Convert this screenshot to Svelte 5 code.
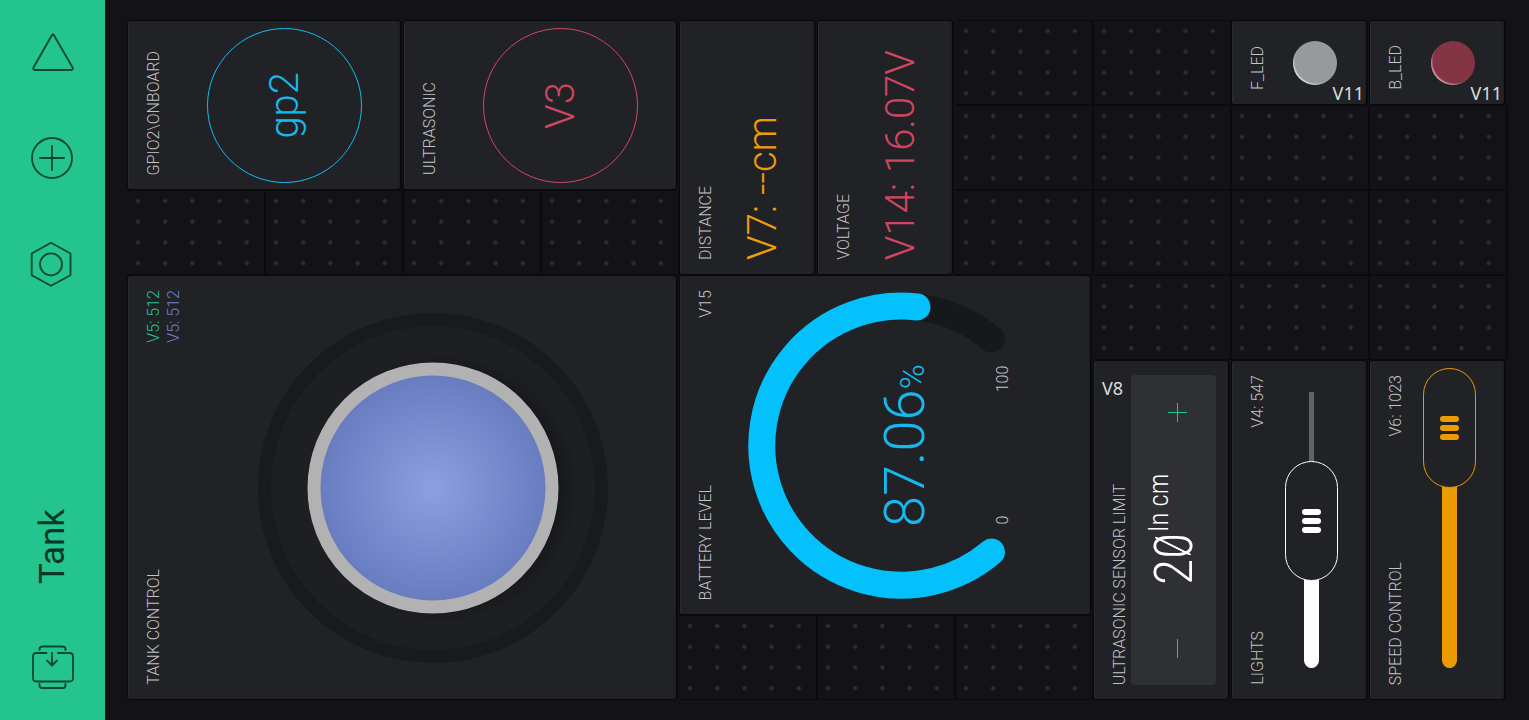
<script>
  const COLS = 10;
  const ROWS = 8;

  // Areas taken by widgets, as [column, row, columns, rows]
  const areas = {
    gpio: [1, 1, 2, 2],
    ultrasonic: [3, 1, 2, 2],
    distance: [5, 1, 1, 3],
    voltage: [6, 1, 1, 3],
    frontLed: [9, 1, 1, 1],
    backLed: [10, 1, 1, 1],
    tank: [1, 4, 4, 5],
    battery: [5, 4, 3, 4],
    limit: [8, 5, 1, 4],
    lights: [9, 5, 1, 4],
    speed: [10, 5, 1, 4],
  };

  const place = ([c, r, w, h]) => `grid-area: ${r} / ${c} / span ${h} / span ${w}`;

  const taken = (c, r) =>
    Object.values(areas).some(([x, y, w, h]) => c >= x && c < x + w && r >= y && r < y + h);

  const emptyCells = [];
  for (let r = 1; r <= ROWS; r++) {
    for (let c = 1; c <= COLS; c++) {
      if (!taken(c, r)) emptyCells.push([c, r, 1, 1]);
    }
  }

  let limit = $state(20);
  let lights = $state(547);
  let speed = $state(1023);
</script>

<div class="app">
  <nav class="bar">
    <button class="icon" aria-label="Run">
      <svg viewBox="0 0 46 46"><path d="M24.100 5.500 42.600 37.500Q43.500 40 41.200 40H5Q2.500 40 3.500 37.500L21.700 5.500Q22.900 3.500 24.100 5.500Z" /></svg>
    </button>
    <button class="icon" aria-label="Add widget">
      <svg viewBox="0 0 46 46"><circle cx="22" cy="22" r="20" /><path d="M22 10v24M10 22h24" /></svg>
    </button>
    <button class="icon" aria-label="Settings">
      <svg viewBox="0 0 46 46"><path d="M21 .8 40.500 11.500v21.800L21 43.800 1.700 33.300V11.500Z" /><circle cx="21" cy="22.300" r="11" /></svg>
    </button>
    <h1 class="up">Tank</h1>
    <button class="icon" aria-label="Projects">
      <svg viewBox="0 0 46 46">
        <path d="M16.500 9H6.500Q3 9 3 12.500V34Q3 37.500 6.500 37.500H39.500Q43 37.500 43 34V12.500Q43 9 39.500 9H28" />
        <path d="M9.500 6V5Q9.500 2.500 12.500 2.500H32.500Q35.500 2.500 35.500 5V6M9.500 40V41Q9.500 44 12 44H33Q35.500 44 35.500 41V40" />
        <path d="M22 9V21M17 16.500 22 21.500 27 16.500" />
      </svg>
    </button>
  </nav>

  <main class="board">
    {#each emptyCells as cell}
      <div class="cell" style={place(cell)}></div>
    {/each}

    <section class="card" style={place(areas.gpio)}>
      <header class="head"><h2 class="up">GPIO2\ONBOARD</h2></header>
      <div class="body"><button class="round blue"><span class="up">gp2</span></button></div>
    </section>

    <section class="card" style={place(areas.ultrasonic)}>
      <header class="head"><h2 class="up">ULTRASONIC</h2></header>
      <div class="body"><button class="round red"><span class="up">V3</span></button></div>
    </section>

    <section class="card" style={place(areas.distance)}>
      <header class="head"><h2 class="up">DISTANCE</h2></header>
      <div class="body reading"><p class="up amber">V7: --cm</p></div>
    </section>

    <section class="card" style={place(areas.voltage)}>
      <header class="head"><h2 class="up">VOLTAGE</h2></header>
      <div class="body reading"><p class="up red">V14: 16.07V</p></div>
    </section>

    <section class="card led" style={place(areas.frontLed)}>
      <header class="head"><h2 class="up">F_LED</h2></header>
      <div class="body"><i class="lamp"></i></div>
      <span class="pin corner">V11</span>
    </section>

    <section class="card led" style={place(areas.backLed)}>
      <header class="head"><h2 class="up">B_LED</h2></header>
      <div class="body"><i class="lamp lit"></i></div>
      <span class="pin corner">V11</span>
    </section>

    <section class="card" style={place(areas.tank)}>
      <header class="head">
        <span class="up label green">V5: 512</span>
        <h2 class="up">TANK CONTROL</h2>
      </header>
      <div class="head second"><span class="up label indigo">V5: 512</span></div>
      <div class="body">
        <svg class="stick" viewBox="0 0 350 350" role="img" aria-label="Joystick">
          <defs>
            <radialGradient id="ball">
              <stop offset="0" stop-color="#8b9fe1" />
              <stop offset="1" stop-color="#667bbd" />
            </radialGradient>
            <radialGradient id="shade">
              <stop offset=".85" stop-color="#121316" stop-opacity=".6" />
              <stop offset="1" stop-color="#121316" stop-opacity="0" />
            </radialGradient>
          </defs>
          <circle cx="175" cy="175" r="168.500" fill="#1e1f23" stroke="#191a1e" stroke-width="13" />
          <circle cx="186" cy="175" r="135" fill="url(#shade)" />
          <circle cx="175" cy="175" r="119" fill="url(#ball)" />
          <circle cx="175" cy="175" r="119" fill="none" stroke="#b2b2b2" stroke-width="13" />
        </svg>
      </div>
    </section>

    <section class="card" style={place(areas.battery)}>
      <header class="head">
        <span class="up label">V15</span>
        <h2 class="up">BATTERY LEVEL</h2>
      </header>
      <div class="body">
        <svg class="gauge" viewBox="0 0 370 338" role="img" aria-label="Battery level">
          <path d="M271.500 276A139.500 139.500 0 1 1 271.500 63" stroke="#17181c" />
          <path d="M271.500 276A139.500 139.500 0 1 1 197 31" stroke="#04c0fb" />
          <g transform="rotate(-90)">
            <text class="value" x="-251" y="204">87.06<tspan class="unit">%</tspan></text>
            <text class="scale" x="-244" y="288">0</text>
            <text class="scale" x="-103" y="288">100</text>
          </g>
        </svg>
      </div>
    </section>

    <section class="card" style={place(areas.limit)}>
      <header class="head"><h2 class="up">ULTRASONIC SENSOR LIMIT</h2></header>
      <div class="stepper">
        <button aria-label="Increase" onclick={() => limit++}>
          <svg viewBox="0 0 20 20"><path d="M10.500 1v19M1 10.500h19" /></svg>
        </button>
        <output class="up"><span class="num">{#each String(limit) as digit}<span class:zero={digit === "0"}>{digit}</span>{/each}</span><span class="in">In cm</span></output>
        <button aria-label="Decrease" onclick={() => limit--}>
          <svg viewBox="0 0 20 20"><path d="M10.500 1v19" /></svg>
        </button>
      </div>
      <span class="pin top">V8</span>
    </section>

    <section class="card" style={place(areas.lights)}>
      <header class="head">
        <span class="up label">V4: {lights}</span>
        <h2 class="up"><label for="lights">LIGHTS</label></h2>
      </header>
      <div class="slider white" style="--v: {lights / 1023}">
        <i class="rail"></i>
        <i class="fill"></i>
        <input id="lights" type="range" min="0" max="1023" bind:value={lights} />
      </div>
    </section>

    <section class="card" style={place(areas.speed)}>
      <header class="head">
        <span class="up label">V6: {speed}</span>
        <h2 class="up"><label for="speed">SPEED CONTROL</label></h2>
      </header>
      <div class="slider orange" style="--v: {speed / 1023}">
        <i class="rail"></i>
        <i class="fill"></i>
        <input id="speed" type="range" min="0" max="1023" bind:value={speed} />
      </div>
    </section>
  </main>
</div>

<style>
  :global(body) {
    margin: 0;
    background: #121217;
  }

  .app {
    display: flex;
    min-height: 100vh;
    color: #c4c4c6;
    font-family: Roboto, "Open Sans", sans-serif;
    font-weight: 300;
  }

  button {
    padding: 0;
    border: 0;
    background: none;
    color: inherit;
    font: inherit;
    cursor: pointer;
  }

  h1,
  h2,
  p {
    margin: 0;
    font-weight: 300;
  }

  /* Text that reads from bottom to top */
  .up {
    writing-mode: vertical-rl;
    transform: rotate(180deg);
    white-space: nowrap;
  }

  .bar {
    display: flex;
    flex-direction: column;
    align-items: center;
    gap: 60px;
    flex: 0 0 105px;
    box-sizing: border-box;
    padding: 30px 0;
    background: #24c48e;
  }

  .bar h1 {
    margin-top: auto;
    color: #08372a;
    font-size: 35px;
    font-weight: 400;
    line-height: 44px;
  }

  .icon,
  .icon svg {
    display: block;
    width: 46px;
    height: 46px;
  }

  .icon svg {
    overflow: visible;
    fill: none;
    stroke: #0b4636;
    stroke-width: 1.8;
    stroke-linecap: round;
    stroke-linejoin: round;
  }

  .board {
    display: grid;
    flex: 1;
    grid-template-columns: repeat(10, minmax(0, 1fr));
    grid-template-rows: repeat(8, minmax(0, 1fr));
    padding: 20px 22px;
  }

  .cell {
    margin: 0 -1px 0 1px;
    border: solid #0b0b0f;
    border-width: 1px 2px 1px 0;
    background: radial-gradient(circle at 10px 10px, #303135 1px, transparent 3px) 0 0 / 20% 25% #121217;
  }

  .card {
    position: relative;
    display: flex;
    min-width: 0;
    margin: 1px 3px 1px 1px;
    box-sizing: border-box;
    border-radius: 3px;
    background: #212226;
    box-shadow: inset 1px 0 #2b2c30, inset -1px 0 #1d1e22, 0 0 0 1px #09090d, 2px 0 0 #0c0c10;
  }

  .head {
    display: flex;
    flex: 0 0 20px;
    flex-direction: column;
    justify-content: space-between;
    padding: 14px 4px 14px 16px;
  }

  .head h2,
  .label {
    font-size: 16px;
    line-height: 20px;
  }

  .head h2 {
    margin-top: auto;
  }

  .second {
    margin-left: -4px;
    padding-left: 0;
    padding-right: 6px;
  }

  .body {
    display: flex;
    flex: 1;
    min-width: 0;
    align-items: center;
    justify-content: center;
  }

  .green {
    color: #24c48e;
  }

  .indigo {
    color: #6c80c8;
  }

  .blue {
    color: #16b9ee;
  }

  .red {
    color: #d3455e;
  }

  .amber {
    color: #ed9d0a;
  }

  .round {
    display: flex;
    align-items: center;
    justify-content: center;
    width: 155px;
    height: 155px;
    border: 1px solid;
    border-radius: 50%;
    font-size: 40px;
  }

  .reading {
    align-items: flex-end;
    padding: 0 8px 14px 0;
  }

  .reading p {
    font-size: 40px;
    line-height: 48px;
  }

  .led .body {
    padding-right: 8px;
  }

  .lamp {
    width: 44px;
    height: 44px;
    border-radius: 50%;
    background: radial-gradient(circle at 24px 20px, transparent 22px, #d8d8d8 24px) #98999b;
  }

  .lit {
    background: radial-gradient(circle at 24px 20px, transparent 22px, #d09aa4 24px) #843545;
  }

  .pin {
    position: absolute;
    color: #dcdcdc;
    font: 400 18px/20px "Noto Sans", "Open Sans", sans-serif;
  }

  .corner {
    right: 2px;
    bottom: 1px;
  }

  .top {
    top: 17px;
    left: 8px;
  }

  .stick {
    width: 350px;
    max-width: 100%;
  }

  .gauge {
    width: 100%;
  }

  .gauge path {
    fill: none;
    stroke-width: 27;
    stroke-linecap: round;
  }

  .value {
    fill: #16b9ee;
    font-size: 56px;
  }

  .unit {
    font-size: 34px;
  }

  .scale {
    fill: #c4c4c6;
    font-size: 16px;
    text-anchor: middle;
  }

  .stepper {
    display: flex;
    flex: 1;
    flex-direction: column;
    align-items: center;
    justify-content: space-between;
    margin: 14px 12px 14px -3px;
    padding: 27px 0;
    border-radius: 4px;
    background: #2f3034;
  }

  .stepper svg {
    display: block;
    width: 20px;
    height: 20px;
    overflow: visible;
    margin-left: 7px;
    stroke: #24c48e;
  }

  .stepper output {
    display: flex;
    align-items: flex-start;
    color: #fff;
    font-family: "Roboto Condensed", "Liberation Sans Narrow", Roboto, sans-serif;
  }

  .num {
    font-size: 54px;
    line-height: 60px;
  }

  .zero {
    background: linear-gradient(to top right, transparent 46%, #fff 48% 52%, transparent 54%) center / 36px 18px no-repeat;
  }

  .in {
    font-size: 27px;
    line-height: 30px;
  }

  .slider {
    display: grid;
    flex: 1;
    justify-items: center;
    margin: 7px 16px 11px 0;
  }

  .slider > * {
    grid-area: 1 / 1;
  }

  .white {
    --c: #fff;
    --bars: url("data:image/svg+xml,%3Csvg xmlns='http://www.w3.org/2000/svg' width='19' height='24' fill='%23fff'%3E%3Crect width='19' height='6' rx='3'/%3E%3Crect y='9' width='19' height='6' rx='3'/%3E%3Crect y='18' width='19' height='6' rx='3'/%3E%3C/svg%3E");
  }

  .orange {
    --c: #eb9b00;
    --bars: url("data:image/svg+xml,%3Csvg xmlns='http://www.w3.org/2000/svg' width='19' height='24' fill='%23eb9b00'%3E%3Crect width='19' height='6' rx='3'/%3E%3Crect y='9' width='19' height='6' rx='3'/%3E%3Crect y='18' width='19' height='6' rx='3'/%3E%3C/svg%3E");
  }

  .rail {
    width: 5px;
    margin: 24px 0 20px;
    background: #626367;
  }

  .fill {
    align-self: end;
    width: 15px;
    height: calc(40px + var(--v) * (100% - 120px));
    margin-bottom: 20px;
    border-radius: 0 0 8px 8px;
    background: var(--c);
  }

  .slider input {
    width: 53px;
    height: 100%;
    margin: 0;
    appearance: none;
    background: none;
    writing-mode: vertical-lr;
    direction: rtl;
  }

  .slider input::-webkit-slider-thumb {
    appearance: none;
    box-sizing: border-box;
    width: 53px;
    height: 120px;
    border: 1px solid var(--c);
    border-radius: 27px;
    background: var(--bars) center no-repeat #212226;
  }
</style>
